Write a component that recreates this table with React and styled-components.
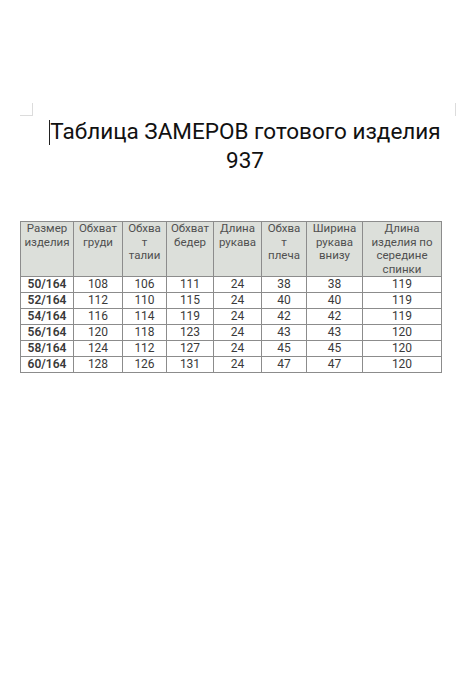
import React from "react";
import styled, { createGlobalStyle } from "styled-components";

const Global = createGlobalStyle`
  html, body { margin: 0; padding: 0; background: #fff; }
  body { font-family: Roboto, "Noto Sans", "Liberation Sans", sans-serif; }
`;

const Page = styled.div`
  width: 460px;
  height: 690px;
  background: #fff;
  display: flex;
  flex-direction: column;
  padding-top: 103px;
  box-sizing: border-box;
`;

const Guides = styled.div`
  display: flex;
  justify-content: space-between;
  height: 14px;
  padding-left: 20px;
`;

const Mark = styled.div`
  width: 13px;
  height: 13px;
  box-sizing: border-box;
  border-right: ${(p) => (p.$side === "left" ? "1px solid #dcdcdc" : "none")};
  border-left: ${(p) => (p.$side === "right" ? "1px solid #dcdcdc" : "none")};
  border-bottom: ${(p) => (p.$side === "right" ? "none" : "1px solid #dcdcdc")};
  margin-right: ${(p) => (p.$side === "right" ? "-8px" : "0")};
`;

const Title = styled.h1`
  margin: 0;
  padding-left: 30px;
  font-weight: 400;
  font-size: 22.5px;
  line-height: 29px;
  color: #111;
  text-align: center;
  white-space: nowrap;
`;

const Caret = styled.span`
  display: inline-block;
  width: 1px;
  height: 25px;
  background: #222;
  vertical-align: -6px;
`;

const TableWrap = styled.div`
  padding-left: 20px;
  margin-top: 46px;
`;

const Table = styled.table`
  border-collapse: collapse;
  table-layout: fixed;
  width: 422px;
  font-family: Roboto, "Noto Sans", "Liberation Sans", sans-serif;
`;

const Th = styled.th`
  background: #dcdfda;
  border: 1px solid #8c8c8c;
  font-weight: 400;
  font-size: 11.5px;
  line-height: 13.5px;
  color: #505050;
  vertical-align: top;
  padding: 0;
  height: 52px;
  text-align: center;
  white-space: nowrap;
`;

const Td = styled.td`
  border: 1px solid #8c8c8c;
  font-size: 12px;
  line-height: 15px;
  height: 15px;
  padding: 0;
  text-align: center;
  color: #3a3a3a;
  font-weight: ${(p) => (p.$bold ? 600 : 400)};
`;

const cols = [53, 49, 44, 47, 48, 45, 56, 79];

const headers = [
  ["Размер", "изделия"],
  ["Обхват", "груди"],
  ["Обхва", "т", "талии"],
  ["Обхват", "бедер"],
  ["Длина", "рукава"],
  ["Обхва", "т", "плеча"],
  ["Ширина", "рукава", "внизу"],
  ["Длина", "изделия по", "середине", "спинки"],
];

const rows = [
  ["50/164", 108, 106, 111, 24, 38, 38, 119],
  ["52/164", 112, 110, 115, 24, 40, 40, 119],
  ["54/164", 116, 114, 119, 24, 42, 42, 119],
  ["56/164", 120, 118, 123, 24, 43, 43, 120],
  ["58/164", 124, 112, 127, 24, 45, 45, 120],
  ["60/164", 128, 126, 131, 24, 47, 47, 120],
];

export default function App() {
  return (
    <Page>
      <Global />
      <Guides>
        <Mark $side="left" />
        <Mark $side="right" />
      </Guides>
      <Title>
        <Caret />
        Таблица ЗАМЕРОВ готового изделия
        <br />
        937
      </Title>
      <TableWrap>
        <Table>
          <colgroup>
            {cols.map((w, i) => (
              <col key={i} style={{ width: w }} />
            ))}
          </colgroup>
          <thead>
            <tr>
              {headers.map((h, i) => (
                <Th key={i}>
                  {h.map((line, k) => (
                    <React.Fragment key={k}>
                      {k > 0 && <br />}
                      {line}
                    </React.Fragment>
                  ))}
                </Th>
              ))}
            </tr>
          </thead>
          <tbody>
            {rows.map((r, i) => (
              <tr key={i}>
                {r.map((c, j) => (
                  <Td key={j} $bold={j === 0}>
                    {c}
                  </Td>
                ))}
              </tr>
            ))}
          </tbody>
        </Table>
      </TableWrap>
    </Page>
  );
}
